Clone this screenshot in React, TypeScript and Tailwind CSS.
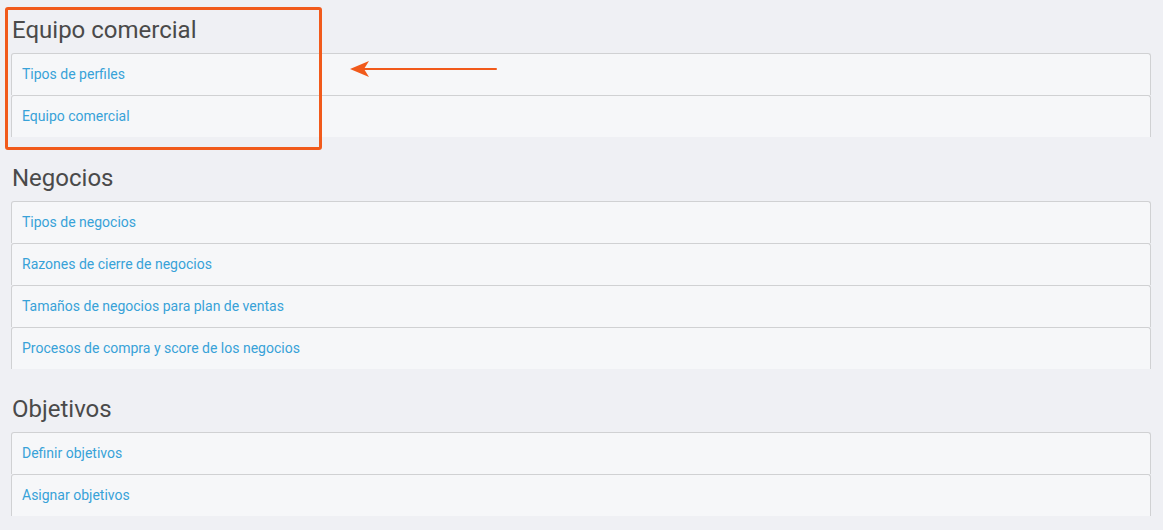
const sections = [
  {
    title: 'Equipo comercial',
    items: ['Tipos de perfiles', 'Equipo comercial'],
    gap: 'mt-0',
  },
  {
    title: 'Negocios',
    items: [
      'Tipos de negocios',
      'Razones de cierre de negocios',
      'Tamaños de negocios para plan de ventas',
      'Procesos de compra y score de los negocios',
    ],
    gap: 'mt-[27px]',
  },
  {
    title: 'Objetivos',
    items: ['Definir objetivos', 'Asignar objetivos'],
    gap: 'mt-[26px]',
  },
]

const Section = ({ title, items, gap }: { title: string; items: string[]; gap: string }) => {
  return (
    <div className={`flex flex-col ${gap}`}>
      <h2 className="text-[24px] leading-[28px] text-[#4a4a4a] pl-[1px] mb-[9px]">{title}</h2>
      <div className="flex flex-col">
        {items.map((item) => (
          <a
            key={item}
            href="#"
            className="h-[42px] flex items-center pl-[10px] border-t border-x border-[#d0d1d3] rounded-t-[3px] bg-[#f6f7f9] text-[14px] text-[#38a2d8]"
          >
            {item}
          </a>
        ))}
      </div>
    </div>
  )
}

export default function App() {
  return (
    <div
      className="relative w-[1163px] h-[530px] bg-[#eff0f4] overflow-hidden"
      style={{ fontFamily: 'Roboto, "Noto Sans", sans-serif' }}
    >
      <div className="flex flex-col pl-[11px] pr-[12px] pt-[16px]">
        {sections.map((s) => (
          <Section key={s.title} title={s.title} items={s.items} gap={s.gap} />
        ))}
      </div>

      {/* annotation */}
      <div className="absolute left-[5px] top-[7px] w-[317px] h-[143px] border-[3px] border-[#f15a1b] rounded-[3px]" />
      <svg className="absolute left-[348px] top-[59px]" width="152" height="20" viewBox="0 0 152 20">
        <line x1="14" y1="10" x2="148" y2="10" stroke="#f15a1b" strokeWidth="2" strokeLinecap="round" />
        <path d="M2 10 L21 2 L16 10 L21 18 Z" fill="#f15a1b" />
      </svg>
    </div>
  )
}
